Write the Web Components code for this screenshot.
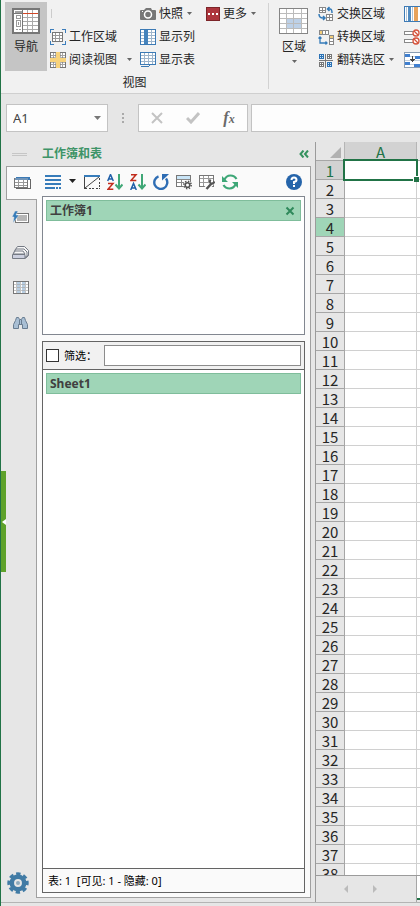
<!DOCTYPE html>
<html lang="zh-CN">
<head>
<meta charset="utf-8">
<meta name="viewport" content="width=device-width, initial-scale=1">
<title>工作簿和表</title>
<style>
  html, body { height: 100%; margin: 0; }
  body {
    font: 12px/16px "Noto Sans", "Noto Sans CJK SC", sans-serif;
    color: #262626;
    overflow: hidden;
  }
</style>
</head>
<body>
<workbook-app></workbook-app>

<script>
// cell lines for the small table icons
function lines(xs, ys, x1, y1, x2, y2) {
  return xs.map((x) => `M${x} ${y1}V${y2}`).join("") + ys.map((y) => `M${x1} ${y}H${x2}`).join("");
}

const ICONS = {
  navigation: [28, 26, `<path fill="#fff" stroke="#777" stroke-width="2" d="M1 1h26v24H1z"/>
    <path fill="#a2a2a2" d="M3 3h7v3H3z"/><path fill="#777" d="M10 2h1v22h-1zM2 5h9v1H2z"/>
    <path stroke="#aaa" d="${lines([15.5, 20.5], [9.5, 13.5, 17.5, 21.5], 11, 2, 26, 24)}"/>
    <path fill="#d24726" d="M11 5h15v1H11z"/>
    <path fill="none" stroke="#999" d="M4.500 7.500h4v3h-4zM4.500 12.500h4v6h-4zM6.500 14v3M4 21.500h2M7 21.500h2"/>`],
  workarea: [16, 16, `<path fill="none" stroke="#3c7dbb" d="M.5 4V.5H4M12 .5h3.500V4M.5 12v3.500H4M12 15.500h3.500V12"/>
    <path fill="#fff" stroke="#777" d="M2.500 3.500h10v9h-10z"/><path stroke="#999" d="${lines([5.5, 9.5], [6.5, 9.5], 3, 4, 12, 12)}"/>`],
  reading: [16, 16, `<path fill="#fff" stroke="#777" d="M.5.5h15v15H.5z"/>
    <path stroke="#a5a5a5" d="${lines([3.5, 12.5], [3.5, 12.5], 1, 1, 15, 15)}"/>
    <path fill="#f8d37c" d="M6 0h4v6h6v4h-6v6H6v-6H0V6h6z"/><path fill="none" stroke="#777" d="M5.500 1v4.500H1M10.500 1v4.500H15M5.500 15v-4.500H1M10.500 15v-4.500H15" opacity=".55"/>`],
  camera: [16, 14, `<path fill="#777" shape-rendering="auto" d="M1 3h3l2-2h5l1 2h3q1 0 1 1v8q0 1-1 1H1q-1 0-1-1V4q0-1 1-1z"/>
    <circle cx="8" cy="7.500" r="3.500" fill="#777" stroke="#fff" stroke-width="1.500" shape-rendering="auto"/><path fill="#fff" d="M2 4h1v1H2z"/>`],
  more: [14, 14, `<path fill="#ad353d" stroke="#7c2529" d="M.5.5h13v13H.5z"/><path fill="#fff" d="M2 6h2v2H2zM6 6h2v2H6zM10 6h2v2h-2z"/>`],
  showcol: [16, 16, `<path fill="#fff" d="M0 0h16v16H0z"/><path stroke="#9eb5cc" d="${lines([11.5], [3.5, 6.5, 9.5, 12.5], 1, 1, 15, 15)}"/>
    <path fill="#4583bc" d="M4 0h4v16H4z"/><path fill="none" stroke="#3c7ab5" d="M.5.5h15v15H.5z"/>`],
  showsheet: [16, 16, `<path fill="#fff" stroke="#3c7ab5" d="M.5.5h15v12H.5z"/><path stroke="#9eb5cc" d="${lines([4.5, 8.5, 12.5], [3.5, 6.5, 9.5], 1, 1, 15, 12)}"/>
    <path fill="#3c7ab5" d="M1 14h8v1H1zM9 13h1v1H9z"/>`],
  area: [30, 26, `<path fill="#fff" d="M1 1h28v24H1z"/><path fill="#bdd1e8" d="M8 11h14v9H8z"/>
    <path stroke="#bbb" d="${lines([7.5, 14.5, 22.5], [5.5, 10.5, 15.5, 20.5], 1, 1, 29, 25)}"/>
    <path fill="none" stroke="#858585" d="M.5.5h28v25H.5z"/>`],
  swap: [16, 16, `<path fill="#fff" stroke="#888" d="M1.500 1.500h6v5h-6zM4.500 1.500v5M1 4.500h6M8.500 8.500h6v6h-6zM11.500 8.500v6M8 11.500h6"/>
    <g shape-rendering="auto" fill="none" stroke="#347bb9" stroke-width="1.500"><path d="M9 3h3q2 0 2 4M11.500 1 9.500 3l2 2M1 8q0 4 4 4h2M5 10l2 2-2 2"/></g>`],
  transpose: [16, 16, `<path fill="#fff" stroke="#888" d="M1.500 1.500h9v4h-9zM4.500 1.500v4M7.500 1.500v4M11.500 6.500h4v9h-4zM11.500 9.500h4M11.500 12.500h4"/>
    <path fill="#f3cd7a" d="M2 2h2v3H2zM12 7h3v2h-3z"/><path shape-rendering="auto" fill="none" stroke="#347bb9" stroke-width="1.300" d="M2 8v6h7M.5 9.500 2 8l1.500 1.500M7.500 12.500 9 14l-1.500 1.500"/>`],
  flip: [16, 16, `<path stroke="#777" d="M7.500 2v14M1 8.500h14"/>
    <path fill="#fff" stroke="#777" d="M9.500 2.500h4v4h-4zM11.500 2v5M9 4.500h5M1.500 10.500h4v4h-4zM3.500 10v5M1 12.500h5"/>
    <path fill="#d8e8f6" stroke="#2b72b5" d="M1.500 2.500h4v4h-4zM3.500 2v5M1 4.500h5M9.500 10.500h4v4h-4zM11.500 10v5M9 12.500h5"/>`],
  stripes: [18, 16, `<path fill="#fff" stroke="#3c7ab5" d="M.5.500h19v15H.5z"/><path fill="#4f8ac0" d="M4 1h3v14H4z"/><path fill="#e7a35c" d="M10 1h4v14h-4z"/>
    <path stroke="#b2c4d5" d="M2.500 1v14M8.500 1v14"/>`],
  clearrows: [18, 16, `<path fill="#fff" stroke="#888" d="M.5 2.500h9v3h-9zM.5 10.500h9v3h-9z"/>
    <g shape-rendering="auto" fill="#fff" stroke="#d6543d" stroke-width="1.300"><circle cx="12" cy="4" r="3"/><circle cx="12" cy="12" r="3"/><path d="m10 2 4 4M10 10l4 4"/></g>`],
  sortcells: [18, 16, `<path fill="#fff" stroke="#8a9db2" d="M.5.500h19v15H.5z"/><path stroke="#c4d0dc" d="M1 4.500h17M1 8.500h17M1 12.500h17"/>
    <path fill="#3f7fd0" d="M1 2h5v3H1zM1 10h5v3H1zM11 4h5v3h-5zM10 12h6v3h-6z"/><path stroke="#444" fill="none" d="M8.500 4v5M6.500 7l2 2 2-2"/>`],
  tabsheets: [17, 13, `<path fill="#fff" stroke="#666" d="M2.500 2.500h14v9h-14z"/><path fill="#3c7ab5" d="M2 0h14v3H2z"/>
    <path fill="#fff" stroke="#777" d="M.5 1.500h13v9H.5z"/><path fill="#7195b9" d="M1 1h13v2H1z"/><path stroke="#999" d="${lines([4.5, 9.5], [5.5, 8.5], 1, 3, 13, 10)}"/>`],
  quick: [18, 13, `<path fill="#fff" stroke="#777" d="M3.500 2.500h13v9h-13z"/><path fill="#b6b6b6" d="M5 4h10v6H5z"/>
    <path fill="#347bb9" stroke="#e6e6e6" stroke-width=".5" shape-rendering="auto" d="M3 0h3L4 4h3L1 12l1-6H0z"/>`],
  stack: [17, 13, `<g fill="#f6f6f6" stroke="#757b85" shape-rendering="auto"><path d="M5.500.500h7l4 4v5l-3 2.500H3V4z"/><path d="M4 3h8l3 3v5H2V6z"/><path d="M3 5h8l2 3H1z"/><path fill="#ccd0df" d="M.5 8.500h12.500v4H.5z"/><path d="M13 12.500 16.500 9"/></g>`],
  columns: [16, 13, `<path fill="#fff" d="M0 0h16v13H0z"/><path fill="#b9cfe3" d="M4 0h3v13H4zM9 0h3v13H9z"/>
    <path stroke="#aaa" d="${lines([3.5, 7.5, 12.5], [3.5, 6.5, 9.5], 1, 1, 15, 12)}" opacity=".7"/><path fill="none" stroke="#777" d="M.5.5h15v12H.5z"/>`],
  find: [15, 12, `<path fill="#a9bfd4" stroke="#697d91" shape-rendering="auto" d="M3.500.500h2l1 2h2l1-2h2l1 3 2 4v4H9.500v-4h-4v4H.5v-4l2-4z"/>
    <path stroke="#697d91" d="M6.500 3v4M8.500 3v4"/>`],
  list: [16, 14, `<path fill="#377cba" d="M0 0h16v2H0zM0 4h16v2H0zM0 8h16v2H0zM0 12h10v2H0zM11 12h2v2h-2zM14 12h2v2h-2z"/>`],
  hide: [16, 14, `<path fill="#377cba" d="M0 0h16v2H0z"/><path stroke="#444" d="M.5 2v12" /><path stroke="#444" stroke-dasharray="2 1.500" d="M15.500 3v11M1 13.500h15"/>
    <path stroke="#444" shape-rendering="auto" d="M1 13 15 2"/>`],
  sortaz: [16, 16, `<g shape-rendering="auto" fill="none" stroke-width="1.500"><path stroke="#205fa8" d="M.7 7 3.500.500 6.300 7M1.500 5h4"/><path stroke="#c22d1d" d="M1 9.500h5L1 15.300h5.300"/>
    <path stroke="#3fa776" stroke-width="2" d="M12 0v14M8.500 10.500 12 14.500l3.500-4"/></g>`],
  sortza: [16, 16, `<g shape-rendering="auto" fill="none" stroke-width="1.500"><path stroke="#c22d1d" d="M1 .8h5L1 6.500h5.300"/><path stroke="#205fa8" d="M.7 16 3.500 9.500 6.300 16M1.500 14h4"/>
    <path stroke="#3fa776" stroke-width="2" d="M12 0v14M8.500 10.500 12 14.500l3.500-4"/></g>`],
  undo: [16, 16, `<g shape-rendering="auto"><path fill="none" stroke="#2e6db4" stroke-width="2.400" d="M5.500 2.300A6.500 6.500 0 1 0 13 4.500"/><path fill="#2e6db4" d="M9 0h7l-2.500 2.500L9 6.500z"/></g>`],
  gearsheet: [16, 16, `<path fill="#fff" stroke="#777" d="M.5 1.500h14v11H.5z"/><path fill="#c9e5f7" d="M1 2h13v3H1z"/><path stroke="#888" d="M1 5.500h13M1 8.500h9M5.500 5v7"/>
    <g shape-rendering="auto"><circle cx="11.500" cy="11" r="4.300" fill="#fff"/><circle cx="11.500" cy="11" r="2.300" fill="#fff" stroke="#555" stroke-width="1.600"/><circle cx="11.500" cy="11" r="3.700" fill="none" stroke="#555" stroke-width="1.500" stroke-dasharray="1.450 1.450"/></g>`],
  toolsheet: [16, 16, `<path fill="#fff" stroke="#777" d="M.5 1.500h14v11H.5z"/><path stroke="#999" d="${lines([4.5, 9.5], [4.5, 8.5], 1, 2, 14, 12)}"/>
    <g shape-rendering="auto" fill="none"><path stroke="#fff" stroke-width="5" d="m7 15 6-6"/><path stroke="#555" stroke-width="2.500" d="m7.500 15 5-5.500"/><path stroke="#555" stroke-width="2" d="M11.500 5.500q-1.500 3 .5 4t3.500-2"/></g>`],
  refresh: [16, 16, `<g shape-rendering="auto"><path fill="none" stroke="#3ea777" stroke-width="2.200" d="M2 6.500Q4 1.500 8.500 1.500q4 0 6 3.500M14 9.500Q12 14.500 7.500 14.500q-4 0-6-3.500"/><path fill="#3ea777" d="M0 2v6h6L3.500 5.500zM16 14V8h-6l2.500 2.500z"/></g>`],
  help: [16, 16, `<circle cx="8" cy="8" r="8" fill="#2564aa" shape-rendering="auto"/><path fill="none" stroke="#fff" stroke-width="2" shape-rendering="auto" d="M5.500 6q0-2.500 2.500-2.500T10.500 6Q10.500 7.500 8 8v2"/><path fill="#fff" d="M7 11h2v2H7z"/>`],
  gear: [22, 22, `<g shape-rendering="auto" fill="none" stroke="#417ba5"><circle cx="11" cy="11" r="6.200" stroke-width="4.500"/><circle cx="11" cy="11" r="9.200" stroke-width="3" stroke-dasharray="4.300 2.925" transform="rotate(-13 11 11)"/></g><circle cx="11" cy="11" r="2" fill="#8daabd" shape-rendering="auto"/>`],
  close: [10, 10, `<path shape-rendering="auto" stroke="#2f895b" stroke-width="2" d="m1.500 1.500 7 7m0-7-7 7"/>`],
  collapse: [10, 8, `<path shape-rendering="auto" fill="none" stroke="#35925f" stroke-width="2" d="M4.500.500 1.500 4l3 3.500M9 .5 6 4l3 3.500"/>`],
  cross: [12, 12, `<path shape-rendering="auto" stroke="#c3c3c3" stroke-width="2" d="m1 1 10 10m0-10L1 11"/>`],
  check: [14, 12, `<path shape-rendering="auto" fill="none" stroke="#c3c3c3" stroke-width="3" d="m1 6 4 4 8-9"/>`],
  down: [5, 3, `<path fill="#666" shape-rendering="auto" d="M0 0h5L2.500 3z"/>`],
  downwide: [9, 5, `<path fill="currentColor" shape-rendering="auto" d="M1 0h7L4.500 4z"/>`],
  left: [4, 8, `<path fill="#bbb" shape-rendering="auto" d="M4 0v8L0 4z"/>`],
  right: [4, 8, `<path fill="#bbb" shape-rendering="auto" d="M0 0v8l4-4z"/>`],
};

// shared by all the elements below
class BaseElement extends HTMLElement {
  constructor() {
    super();
    const template = document.createElement("template");
    template.innerHTML = this.constructor.styles + this.constructor.markup;
    this.attachShadow({ mode: "open" });
    this.shadowRoot.appendChild(template.content.cloneNode(true));
  }
}

/**
 * An inline svg icon.
 *
 * @element ui-icon
 */
class UiIcon extends BaseElement {
  static get styles() {
    return `<style>:host { display: inline-flex; flex: none; } svg { display: block; }</style>`;
  }

  static get markup() {
    return `<span></span>`;
  }

  connectedCallback() {
    const [w, h, shapes] = ICONS[this.getAttribute("name")];
    this.shadowRoot.querySelector("span").innerHTML =
      `<svg width="${w}" height="${h}" viewBox="0 0 ${w} ${h}" shape-rendering="crispEdges" aria-hidden="true">${shapes}</svg>`;
  }
}
customElements.define("ui-icon", UiIcon);

/**
 * A ribbon command: small by default, tall with the "large" attribute.
 *
 * @element ribbon-button
 */
class RibbonButton extends BaseElement {
  static get styles() {
    return `
      <style>
        :host { display: block; white-space: nowrap; }
        button {
          display: flex;
          align-items: center;
          gap: 3px;
          width: 100%;
          height: 23px;
          padding: 0;
          border: 0;
          background: none;
          color: inherit;
          font: inherit;
        }
        button:hover { background: #dcdcdc; }
        .pic { display: flex; }
        .arrow { display: none; margin-left: 1px; }
        :host([menu]) .arrow { display: inline-flex; }
        :host([spread]) .arrow { margin-left: auto; margin-right: 8px; }
        :host([large]) button {
          flex-direction: column;
          gap: 5px;
          width: 42px;
          height: 69px;
          padding-top: 6px;
        }
        :host([large]) .arrow { margin: 0; }
        :host([pressed]) button { background: #c5c5c5; }
      </style>`;
  }

  static get markup() {
    return `<button type="button"><span class="pic"></span><slot></slot><ui-icon class="arrow" name="down"></ui-icon></button>`;
  }

  connectedCallback() {
    this.shadowRoot.querySelector(".pic").innerHTML = `<ui-icon name="${this.getAttribute("icon")}"></ui-icon>`;
    if (this.hasAttribute("label")) {
      this.shadowRoot.querySelector("button").setAttribute("aria-label", this.getAttribute("label"));
    }
  }
}
customElements.define("ribbon-button", RibbonButton);

/**
 * A titled group of ribbon commands.
 *
 * @element ribbon-group
 */
class RibbonGroup extends BaseElement {
  static get styles() {
    return `
      <style>
        :host { display: flex; flex-direction: column; flex: none; box-sizing: border-box; padding: 2px 4px 0; }
        .tools { display: flex; gap: 3px; height: 73px; align-items: flex-start; }
        .label { text-align: center; }
      </style>`;
  }

  static get markup() {
    return `<div class="tools"><slot></slot></div><div class="label"><slot name="label"></slot></div>`;
  }
}
customElements.define("ribbon-group", RibbonGroup);

/**
 * The ribbon.
 *
 * @element ribbon-bar
 */
class RibbonBar extends BaseElement {
  static get styles() {
    return `
      <style>
        :host { display: flex; flex: none; height: 93px; background: #f1f1f1; border-bottom: 1px solid #cfcfcf; overflow: hidden; }
        .view { width: 267px; }
        .rule { flex: none; width: 1px; margin: 3px 0 4px; background: #d2d2d2; }
        .cols { display: grid; grid-template-rows: repeat(3, 23px); }
        .view .cols { grid-template-columns: 90px 66px auto; }
        .region .cols { grid-template-columns: 86px auto; }
        .stub { align-self: center; width: 1px; height: 9px; margin-left: 1px; background: #ccc; }
      </style>`;
  }

  static get markup() {
    return `
      <ribbon-group class="view">
        <ribbon-button large pressed icon="navigation">导航</ribbon-button>
        <div class="cols">
          <span class="stub"></span>
          <ribbon-button icon="camera" menu>快照</ribbon-button>
          <ribbon-button icon="more" menu>更多</ribbon-button>
          <ribbon-button icon="workarea">工作区域</ribbon-button>
          <ribbon-button icon="showcol">显示列</ribbon-button>
          <span></span>
          <ribbon-button icon="reading" menu spread>阅读视图</ribbon-button>
          <ribbon-button icon="showsheet">显示表</ribbon-button>
        </div>
        <span slot="label">视图</span>
      </ribbon-group>
      <div class="rule"></div>
      <ribbon-group class="region">
        <ribbon-button large menu icon="area">区域</ribbon-button>
        <div class="cols">
          <ribbon-button icon="swap">交换区域</ribbon-button>
          <ribbon-button icon="stripes" label="列"></ribbon-button>
          <ribbon-button icon="transpose">转换区域</ribbon-button>
          <ribbon-button icon="clearrows" label="清除"></ribbon-button>
          <ribbon-button icon="flip" menu>翻转选区</ribbon-button>
          <ribbon-button icon="sortcells" label="排序"></ribbon-button>
        </div>
      </ribbon-group>`;
  }
}
customElements.define("ribbon-bar", RibbonBar);

/**
 * Name box and formula input.
 *
 * @element formula-bar
 */
class FormulaBar extends BaseElement {
  static get styles() {
    return `
      <style>
        :host { display: flex; flex: none; height: 28px; padding: 10px 0 10px 5px; }
        .box { display: flex; align-items: center; box-sizing: border-box; background: #fdfdfd; border: 1px solid #c3c3c3; }
        .name { width: 102px; padding-right: 5px; color: #777; }
        input { box-sizing: border-box; min-width: 0; border: 0; outline: 0; padding: 0 6px; background: none; color: #444; font: inherit; font-size: 13px; }
        .name input { flex: 1; }
        button { display: flex; justify-content: center; align-items: center; width: 36px; height: 26px; padding: 0; border: 0; background: none; color: inherit; font: inherit; }
        .name button { width: 9px; }
        .dots { width: 30px; display: flex; flex-direction: column; align-items: center; justify-content: center; gap: 2px; }
        .dots i { width: 2px; height: 2px; background: #aaa; }
        .fx { font: italic bold 16px/16px "Liberation Serif", serif; color: #6a6a6a; }
        .fx small { font-size: 12px; }
        .value { flex: 1; margin-left: 3px; border: 1px solid #c3c3c3; border-right: 0; background: #fdfdfd; }
      </style>`;
  }

  static get markup() {
    return `
      <div class="box name"><input value="A1" aria-label="名称框"><button type="button" aria-label="名称"><ui-icon name="downwide"></ui-icon></button></div>
      <div class="dots"><i></i><i></i><i></i></div>
      <div class="box">
        <button type="button" aria-label="取消"><ui-icon name="cross"></ui-icon></button>
        <button type="button" aria-label="输入"><ui-icon name="check"></ui-icon></button>
        <button type="button" aria-label="插入函数"><span class="fx">f<small>x</small></span></button>
      </div>
      <input class="value" aria-label="编辑栏">`;
  }
}
customElements.define("formula-bar", FormulaBar);

/**
 * A highlighted entry of a list.
 *
 * @element list-entry
 */
class ListEntry extends BaseElement {
  static get styles() {
    return `
      <style>
        :host {
          display: flex;
          align-items: center;
          justify-content: space-between;
          box-sizing: border-box;
          height: 21px;
          margin: 3px;
          padding: 0 5px 0 3px;
          background: #9fd5b7;
          border: 1px solid #7fbd9b;
          font-weight: bold;
          color: #404040;
        }
        button { display: none; padding: 0; border: 0; background: none; }
        :host([closable]) button { display: flex; }
      </style>`;
  }

  static get markup() {
    return `<span><slot></slot></span><button type="button" aria-label="关闭"><ui-icon name="close"></ui-icon></button>`;
  }
}
customElements.define("list-entry", ListEntry);

/**
 * The navigation pane with its side tabs.
 *
 * @element nav-pane
 */
class NavPane extends BaseElement {
  static get styles() {
    return `
      <style>
        :host { position: relative; display: flex; flex-direction: column; flex: none; box-sizing: border-box; width: 314px; padding: 0 4px 4px 5px; }
        button { display: flex; align-items: center; justify-content: center; padding: 0; border: 0; background: none; color: #222; font: inherit; }
        header { display: flex; align-items: center; height: 24px; }
        .grip { width: 15px; height: 1px; margin: 0 15px 0 6px; border: solid #c6c6c6; border-width: 1px 0; }
        h2 { flex: 1; margin: 0; font-size: 12px; line-height: 16px; color: #3e9468; }
        .collapse { margin-right: 2px; }
        .body { display: flex; flex: 1; min-height: 0; }
        .tabs { z-index: 1; display: flex; flex-direction: column; width: 31px; }
        .tabs button { height: 35px; padding-right: 2px; }
        .tabs .active { box-sizing: border-box; height: 34px; padding: 0; background: #fafafa; border: 1px solid #a0a0a0; border-right: 0; }
        .tabs .settings { width: 22px; height: 22px; padding: 0; margin: auto 0 4px 1px; }
        .panel { display: flex; flex: 1; flex-direction: column; min-width: 0; margin-left: -1px; padding: 0 5px 4px; background: #fafafa; border: 1px solid #a0a0a0; }
        .toolbar { display: flex; align-items: center; gap: 7px; flex: none; height: 29px; padding: 0 3px; }
        .help { margin-left: auto; }
        .books { flex: none; height: 137px; background: #fff; border: 1px solid #828790; }
        .sheets { display: flex; flex: 1; flex-direction: column; min-height: 0; margin-top: 6px; background: #fff; border: 1px solid #646464; }
        .filter { display: flex; align-items: center; height: 27px; padding: 0 3px; background: #f1f1f1; border-bottom: 1px solid #646464; }
        .filter [type=checkbox] { appearance: none; box-sizing: border-box; width: 13px; height: 13px; margin: 0 5px 0 0; background: #fff; border: 1px solid #333; }
        .filter [type=checkbox]:checked { background: #3e9468; }
        .filter label { width: 40px; font-size: 11px; color: #000; }
        .filter [type=text] { flex: 1; box-sizing: border-box; min-width: 0; height: 21px; padding: 0 4px; background: #fff; border: 1px solid #8c8c8c; font: inherit; }
        .list { flex: 1; }
        footer { height: 23px; padding-left: 5px; background: #fafafa; border-top: 1px solid #646464; font-size: 11px; line-height: 23px; color: #000; white-space: pre; }
        .handle { position: absolute; left: 0; top: 329px; width: 5px; height: 101px; background: #5ea22b; }
      </style>`;
  }

  static get markup() {
    return `
      <header><span class="grip"></span><h2>工作簿和表</h2><button class="collapse" type="button" aria-label="折叠"><ui-icon name="collapse"></ui-icon></button></header>
      <div class="body">
        <nav class="tabs">
          <button class="active" type="button" aria-label="工作簿和表"><ui-icon name="tabsheets"></ui-icon></button>
          <button type="button" aria-label="自动文本"><ui-icon name="quick"></ui-icon></button>
          <button type="button" aria-label="名称管理器"><ui-icon name="stack"></ui-icon></button>
          <button type="button" aria-label="列清单"><ui-icon name="columns"></ui-icon></button>
          <button type="button" aria-label="查找和替换"><ui-icon name="find"></ui-icon></button>
          <button class="settings" type="button" aria-label="设置"><ui-icon name="gear"></ui-icon></button>
        </nav>
        <section class="panel">
          <div class="toolbar">
            <button type="button" aria-label="列表"><ui-icon name="list"></ui-icon></button>
            <button type="button" aria-label="列表选项"><ui-icon name="downwide"></ui-icon></button>
            <button type="button" aria-label="隐藏"><ui-icon name="hide"></ui-icon></button>
            <button type="button" aria-label="升序"><ui-icon name="sortaz"></ui-icon></button>
            <button type="button" aria-label="降序"><ui-icon name="sortza"></ui-icon></button>
            <button type="button" aria-label="还原"><ui-icon name="undo"></ui-icon></button>
            <button type="button" aria-label="表设置"><ui-icon name="gearsheet"></ui-icon></button>
            <button type="button" aria-label="表工具"><ui-icon name="toolsheet"></ui-icon></button>
            <button type="button" aria-label="刷新"><ui-icon name="refresh"></ui-icon></button>
            <button class="help" type="button" aria-label="帮助"><ui-icon name="help"></ui-icon></button>
          </div>
          <div class="books"><list-entry closable>工作簿1</list-entry></div>
          <div class="sheets">
            <div class="filter">
              <input type="checkbox" id="use-filter"><label for="use-filter">筛选：</label>
              <input type="text" aria-label="筛选">
            </div>
            <div class="list"><list-entry>Sheet1</list-entry></div>
            <footer>表: 1  [可见: 1 - 隐藏: 0]</footer>
          </div>
        </section>
      </div>
      <button class="handle" type="button" aria-label="收起"><svg width="4" height="6" viewBox="0 0 4 6"><path fill="#fff" d="M4 0v6L0 3z"/></svg></button>`;
  }
}
customElements.define("nav-pane", NavPane);

const COLUMN_WIDTH = 72;
const HEADER_WIDTH = 29;
const ROW_HEIGHT = 19;

/**
 * The worksheet cells. Draws as many rows and columns as there is room for.
 *
 * @element sheet-grid
 */
class SheetGrid extends BaseElement {
  static get styles() {
    return `
      <style>
        :host { display: flex; flex: 1; flex-direction: column; min-width: 0; border-left: 1px solid #9b9b9b; }
        .scroll { flex: 1; min-height: 0; overflow: hidden; background: #fff; }
        table { width: 100%; table-layout: fixed; border-collapse: separate; border-spacing: 0; font: 15px/16px "Noto Sans CJK SC", sans-serif; }
        th, td { box-sizing: border-box; height: ${ROW_HEIGHT}px; padding: 0; border: solid #d0d0d0; border-width: 0 1px 1px 0; }
        th { padding-top: 2px; background: #e6e6e6; border-color: #a6a6a6; font-weight: normal; }
        thead th { width: ${COLUMN_WIDTH}px; border-right-color: #b5b5b5; }
        thead .corner { width: ${HEADER_WIDTH}px; }
        thead .rest { width: auto; }
        .rest { border-right: 0; }
        thead svg { display: block; margin: 0 3px 0 auto; }
        .on { background: #d2d2d2; color: #217346; }
        .mark { background: #9fd5b7; }
        .cursor { position: relative; }
        .cursor::before { content: ""; position: absolute; inset: -2px; border: 2px solid #217346; }
        .cursor::after { content: ""; position: absolute; right: -3px; bottom: -3px; width: 5px; height: 5px; background: #217346; border: solid #fff; border-width: 1px 0 0 1px; }
        footer { display: flex; flex: none; height: 26px; border-top: 1px solid #9b9b9b; }
        .moves { display: flex; flex: none; align-items: center; box-sizing: border-box; width: 101px; padding-left: 15px; border-right: 1px solid #a6a6a6; }
        button { display: flex; justify-content: center; width: 29px; padding: 0; border: 0; background: none; }
        .tab { width: 80px; height: 22px; background: #fff; border-bottom: 2px solid #217346; }
      </style>`;
  }

  static get markup() {
    return `
      <div class="scroll"><table><thead></thead><tbody></tbody></table></div>
      <footer>
        <div class="moves"><button type="button" aria-label="上一个"><ui-icon name="left"></ui-icon></button><button type="button" aria-label="下一个"><ui-icon name="right"></ui-icon></button></div>
        <div class="tab"></div>
      </footer>`;
  }

  connectedCallback() {
    this.resized = this.render.bind(this);
    window.addEventListener("resize", this.resized);
    this.render();
  }

  disconnectedCallback() {
    window.removeEventListener("resize", this.resized);
  }

  render() {
    const area = this.shadowRoot.querySelector(".scroll");
    const count = Math.max(1, Math.floor((area.clientWidth - HEADER_WIDTH) / COLUMN_WIDTH));
    const rowCount = Math.ceil(area.clientHeight / ROW_HEIGHT) - 1;
    const letters = "ABCDEFGHIJKLMNOPQRSTUVWXYZ".slice(0, count).split("");

    const corner = `<th class="corner"><svg width="11" height="11"><path fill="#b1b1b1" d="M11 0v11H0z"/></svg></th>`;
    this.shadowRoot.querySelector("thead").innerHTML =
      `<tr>${corner}${letters.map((l) => `<th class="${l === "A" ? "on" : ""}">${l}</th>`).join("")}<th class="rest"></th></tr>`;

    let rows = "";
    for (let r = 1; r <= rowCount; r++) {
      const state = r === 1 ? "on" : r === 4 ? "mark" : "";
      rows += `<tr><th class="${state}">${r}</th>`;
      rows += letters.map((l) => (r === 1 && l === "A" ? `<td class="cursor"></td>` : "<td></td>")).join("");
      rows += `<td class="rest"></td></tr>`;
    }
    this.shadowRoot.querySelector("tbody").innerHTML = rows;
  }
}

/**
 * The window.
 *
 * @element workbook-app
 */
class WorkbookApp extends BaseElement {
  static get styles() {
    return `
      <style>
        :host { display: flex; flex-direction: column; box-sizing: border-box; height: 100vh; background: #e6e6e6; border-left: 1px solid #217346; overflow: hidden; }
        main { display: flex; flex: 1; min-height: 0; }
        .status { flex: none; height: 3px; border-top: 1px solid #b4b4b4; }
      </style>`;
  }

  static get markup() {
    return `
      <ribbon-bar></ribbon-bar>
      <formula-bar></formula-bar>
      <main><nav-pane></nav-pane><sheet-grid></sheet-grid></main>
      <div class="status"></div>`;
  }
}
customElements.define("workbook-app", WorkbookApp);
// last, so that it measures a finished layout
customElements.define("sheet-grid", SheetGrid);
</script>
</body>
</html>
